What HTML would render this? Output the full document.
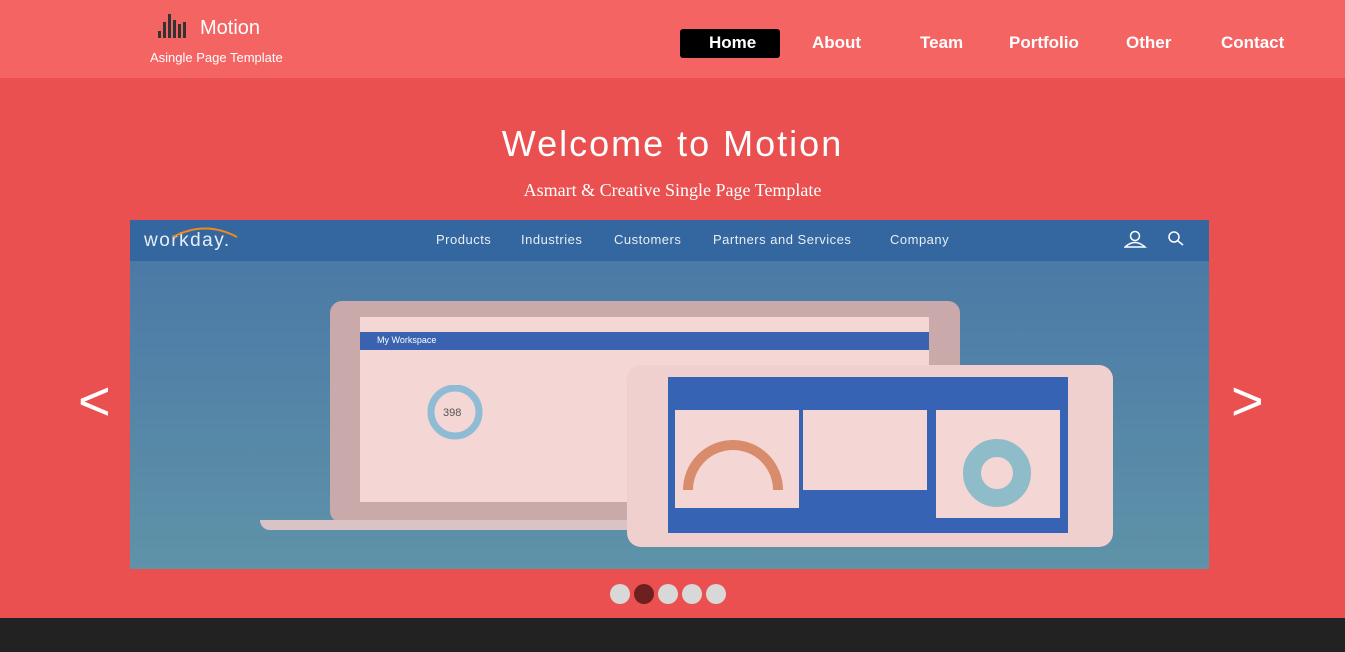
<!DOCTYPE html>
<html><head><meta charset="utf-8"><style>
*{margin:0;padding:0;box-sizing:border-box}
body{width:1345px;height:652px;overflow:hidden;background:#ea5050;font-family:"Liberation Sans",sans-serif;position:relative}
.hdr{position:absolute;left:0;top:0;width:1345px;height:78px;background:#f46463}
.logo{position:absolute;left:158px;top:14px}
.brand{position:absolute;left:200px;top:17px;color:#fff;font-size:20px}
.tag{position:absolute;left:150px;top:50px;color:#fff;font-size:13px}
.nav a{position:absolute;top:33px;color:#fff;font-weight:bold;font-size:17px;text-decoration:none}
.home{position:absolute;left:680px;top:29px;width:100px;height:29px;background:#000;border-radius:3px}
h1{position:absolute;top:123px;width:100%;text-align:center;color:#fff;font-weight:normal;font-size:36px;letter-spacing:2px}
.sub{position:absolute;top:180px;width:100%;text-align:center;color:#fff;font-family:"Liberation Serif",serif;font-size:18px}
.img{position:absolute;left:130px;top:220px;width:1079px;height:349px;background:linear-gradient(#4876a6,#5f93a8);overflow:hidden}
.wn{position:absolute;left:0;top:0;width:100%;height:41px;background:#3466a0;color:#e8eef6;font-size:13px;letter-spacing:0.5px}
.wn span{position:absolute;top:12px}
.arrow{position:absolute;top:368px;color:#fff;font-size:56px;font-weight:100}
.dots{position:absolute;left:610px;top:584px}
.dots i{display:inline-block;width:20px;height:20px;border-radius:50%;background:#d8d8d8;margin-right:4px}
.foot{position:absolute;left:0;top:618px;width:1345px;height:34px;background:#222}
</style></head><body>
<div class="hdr">
<svg class="logo" width="32" height="24"><g fill="#333"><rect x="0" y="17" width="3" height="7"/><rect x="5" y="8" width="3" height="16"/><rect x="10" y="0" width="3" height="24"/><rect x="15" y="6" width="3" height="18"/><rect x="20" y="10" width="3" height="14"/><rect x="25" y="8" width="3" height="16"/></g></svg>
<div class="brand">Motion</div>
<div class="tag">Asingle Page Template</div>
<div class="home"></div>
<div class="nav"><a style="left:709px">Home</a><a style="left:812px">About</a><a style="left:920px">Team</a><a style="left:1009px">Portfolio</a><a style="left:1126px">Other</a><a style="left:1221px">Contact</a></div>
</div>
<h1>Welcome to Motion</h1>
<div class="sub">Asmart &amp; Creative Single Page Template</div>
<div class="img">
<div class="wn"><span style="left:14px;top:10px;font-size:19px;letter-spacing:1.5px">workday.</span>
<svg style="position:absolute;left:40px;top:6px" width="70" height="12"><path d="M3 11 Q35 -6 67 11" stroke="#f08a1c" stroke-width="2" fill="none"/></svg>
<span style="left:306px">Products</span><span style="left:391px">Industries</span><span style="left:484px">Customers</span><span style="left:583px">Partners and Services</span><span style="left:760px">Company</span>
<svg style="position:absolute;left:994px;top:10px" width="60" height="20"><circle cx="11" cy="6" r="4.5" stroke="#fff" fill="none" stroke-width="1.5"/><path d="M1 17 Q11 8 21 17 Z" stroke="#fff" fill="none" stroke-width="1.5"/><circle cx="50" cy="7" r="5" stroke="#fff" fill="none" stroke-width="1.5"/><path d="M54 11 L59 15" stroke="#fff" stroke-width="1.5"/></svg></div>
<div style="position:absolute;left:200px;top:81px;width:630px;height:222px;background:#c9a9aa;border-radius:12px"></div>
<div style="position:absolute;left:230px;top:97px;width:569px;height:185px;background:#f4d6d4"></div>
<div style="position:absolute;left:230px;top:112px;width:569px;height:18px;background:#3a62b0;color:#fff;font-size:9px;padding:3px 17px">My Workspace</div>
<div style="position:absolute;left:130px;top:300px;width:770px;height:10px;background:#d8c4c4;border-radius:0 0 40px 40px"></div>
<svg style="position:absolute;left:285px;top:165px" width="80" height="60"><circle cx="40" cy="27" r="24" stroke="#8fbcd4" stroke-width="7" fill="none"/><text x="28" y="31" font-size="11" fill="#555" font-family="Liberation Sans">398</text></svg>
<div style="position:absolute;left:497px;top:145px;width:486px;height:182px;background:#f0cfcf;border-radius:14px"></div>
<div style="position:absolute;left:538px;top:157px;width:400px;height:156px;background:#3763b4"></div>
<div style="position:absolute;left:545px;top:190px;width:124px;height:98px;background:#f4d6d4"></div>
<div style="position:absolute;left:673px;top:190px;width:124px;height:80px;background:#f4d6d4"></div>
<div style="position:absolute;left:806px;top:190px;width:124px;height:108px;background:#f4d6d4"></div>
<svg style="position:absolute;left:548px;top:210px" width="110" height="70"><path d="M10 60 A45 45 0 1 1 100 60" stroke="#d98c6c" stroke-width="10" fill="none"/></svg>
<svg style="position:absolute;left:810px;top:218px" width="115" height="70"><circle cx="57" cy="35" r="25" stroke="#8fbcc9" stroke-width="18" fill="none"/></svg>
</div>
<div class="arrow" style="left:78px">&lt;</div>
<div class="arrow" style="left:1231px">&gt;</div>
<div class="dots"><i></i><i style="background:#6e1f1f"></i><i></i><i></i><i></i></div>
<div class="foot"></div>
</body></html>
